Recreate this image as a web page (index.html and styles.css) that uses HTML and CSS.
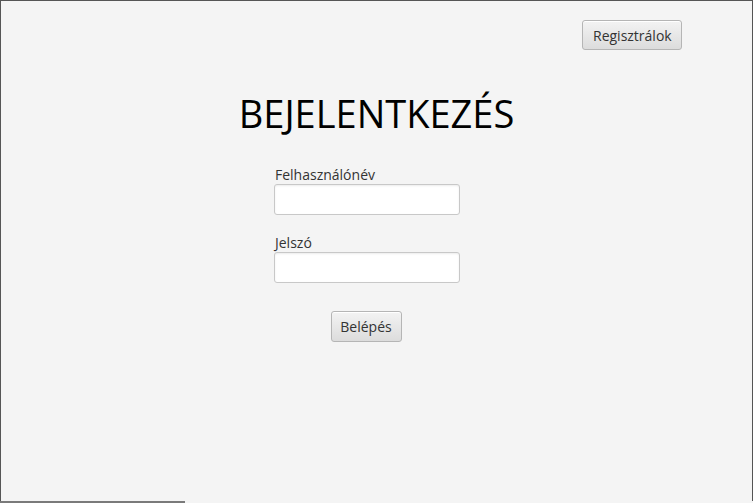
FILE: index.html
```html
<!DOCTYPE html>
<html lang="hu">
<head>
<meta charset="utf-8">
<title>Bejelentkezés</title>
<link rel="stylesheet" href="styles.css">
</head>
<body>
<div class="window">
  <div class="topbar">
    <button class="btn btn-reg" type="button">Regisztrálok</button>
  </div>
  <h1 class="title">BEJELENTKEZÉS</h1>
  <form class="form">
    <label class="field">
      <span class="label">Felhasználónév</span>
      <input class="input" type="text">
    </label>
    <label class="field">
      <span class="label">Jelszó</span>
      <input class="input" type="password">
    </label>
    <div class="actions">
      <button class="btn btn-login" type="button">Belépés</button>
    </div>
  </form>
</div>
<div class="taskbar"></div>
</body>
</html>
```
FILE: styles.css
```css
html, body {
  margin: 0;
  padding: 0;
  background: #f4f4f4;
}
body {
  width: 753px;
  height: 503px;
  overflow: hidden;
  font-family: "Open Sans", "Noto Sans", sans-serif;
  color: #333;
}
.window {
  box-sizing: border-box;
  width: 753px;
  height: 501px;
  border: 1px solid #555;
  border-bottom: none;
  background: #f4f4f4;
  display: flex;
  flex-direction: column;
}
.topbar {
  display: flex;
  justify-content: flex-end;
  padding: 19px 70px 0 0;
}
.btn {
  box-sizing: border-box;
  height: 30px;
  padding: 0 10px;
  border: 1px solid #b5b5b5;
  border-radius: 3px;
  background: linear-gradient(#f3f3f3, #dcdcdc);
  box-shadow: inset 0 1px 0 #fff;
  font-family: "Open Sans", "Noto Sans", sans-serif;
  font-size: 14px;
  color: #333;
  cursor: pointer;
}
.btn-reg {
  width: 100px;
}
.title {
  margin: 40px 0 0 0;
  font-weight: 400;
  font-size: 38px;
  line-height: 46px;
  color: #000;
  text-align: center;
  padding-left: 0;
}
.form {
  display: flex;
  flex-direction: column;
  margin: 30px 0 0 273px;
  width: 186px;
}
.field {
  display: flex;
  flex-direction: column;
  margin-bottom: 19px;
}
.label {
  font-size: 14px;
  line-height: 18px;
  color: #333;
  padding-left: 1px;
}
.input {
  box-sizing: border-box;
  width: 186px;
  height: 31px;
  margin: 0;
  border: 1px solid #c8c8c8;
  border-radius: 3px;
  background: #fff;
  box-shadow: inset 0 1px 2px rgba(0,0,0,0.08);
  outline: none;
}
.actions {
  display: flex;
  justify-content: center;
  margin-top: 9px;
}
.btn-login {
  width: 71px;
  height: 31px;
  padding: 0;
  margin-right: 2px;
}
.taskbar {
  width: 185px;
  height: 2px;
  background: #7a7a7a;
}
```
